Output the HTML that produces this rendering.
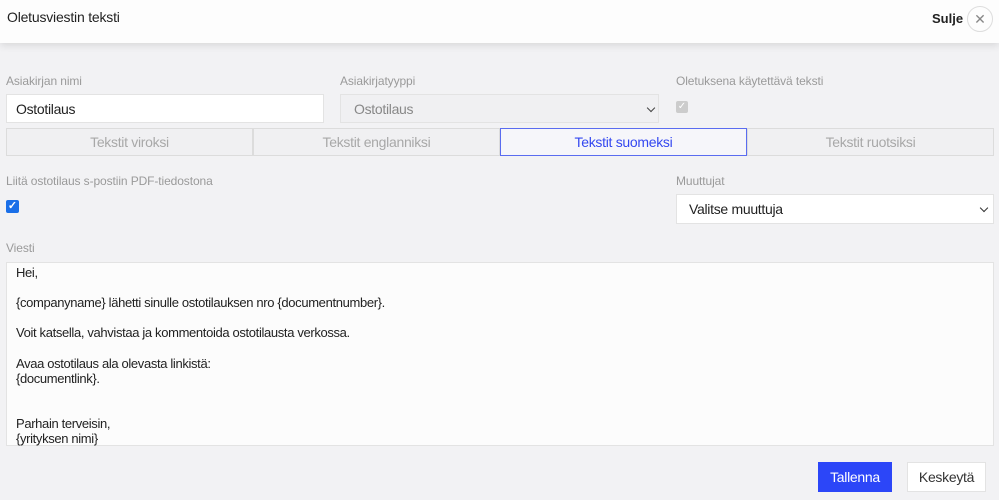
<!DOCTYPE html>
<html><head><meta charset="utf-8"><style>
*{box-sizing:border-box;margin:0;padding:0}
body{width:999px;height:500px;background:#f2f2f4;font-family:"Liberation Sans",sans-serif;position:relative;overflow:hidden;color:#333}
.hdr{position:absolute;left:0;top:0;width:999px;height:43px;background:#fdfdfd;box-shadow:0 2px 8px rgba(0,0,0,.12)}
.abs{position:absolute}
.lbl{position:absolute;font-size:12px;color:#9a9a9a;letter-spacing:-0.1px}
.box{position:absolute;background:#fff;border:1px solid #e3e3e3;font-size:14px;padding-left:9px;display:flex;align-items:center;letter-spacing:-0.3px}
.tab{position:absolute;top:128px;height:28px;border:1px solid #dcdcdc;background:#f0f0f2;color:#a8a8a8;font-size:14px;display:flex;align-items:center;justify-content:center;letter-spacing:-0.3px}
.chev{position:absolute;width:6px;height:6px;border-right:1.5px solid #333;border-bottom:1.5px solid #333;transform:rotate(45deg)}
</style></head><body>
<div class="hdr">
 <div class="abs" style="left:7px;top:9px;font-size:14px;color:#222;letter-spacing:-0.2px">Oletusviestin teksti</div>
 <div class="abs" style="left:932px;top:11px;font-size:13px;font-weight:bold;color:#222">Sulje</div>
 <div class="abs" style="left:967px;top:6px;width:26px;height:26px;border:1px solid #ddd;border-radius:50%;color:#888;font-size:14px;text-align:center;line-height:24px">✕</div>
</div>
<div class="lbl" style="left:6px;top:74px">Asiakirjan nimi</div>
<div class="lbl" style="left:340px;top:74px">Asiakirjatyyppi</div>
<div class="lbl" style="left:676px;top:74px">Oletuksena käytettävä teksti</div>
<div class="box" style="left:6px;top:94px;width:318px;height:29px;color:#222">Ostotilaus</div>
<div class="box" style="left:340px;top:94px;width:319px;height:29px;background:#f0f0f2;color:#888;padding-left:13px">Ostotilaus</div>
<div class="chev" style="left:648px;top:105px;border-color:#444"></div>
<div class="abs" style="left:676px;top:101px;width:12px;height:12px;background:#ccc;border-radius:2px;color:#fff;font-size:10px;line-height:12px;text-align:center">✓</div>
<div class="tab" style="left:6px;width:247px">Tekstit viroksi</div>
<div class="tab" style="left:253px;width:247px">Tekstit englanniksi</div>
<div class="tab" style="left:500px;width:247px;border-color:#5a6cf0;background:#f6f6fa;color:#3448f0">Tekstit suomeksi</div>
<div class="tab" style="left:747px;width:247px">Tekstit ruotsiksi</div>
<div class="lbl" style="left:6px;top:174px">Liitä ostotilaus s-postiin PDF-tiedostona</div>
<div class="abs" style="left:6px;top:200px;width:13px;height:13px;background:#1a6fe8;border-radius:2px;color:#fff;font-size:11px;line-height:13px;text-align:center;font-weight:bold">✓</div>
<div class="lbl" style="left:676px;top:174px">Muuttujat</div>
<div class="box" style="left:676px;top:194px;width:318px;height:30px;color:#222;padding-left:12px">Valitse muuttuja</div>
<div class="chev" style="left:981px;top:205px"></div>
<div class="lbl" style="left:6px;top:241px">Viesti</div>
<div class="box" style="left:6px;top:262px;width:988px;height:184px;background:#fcfcfc;align-items:flex-start;padding:2px 0 0 9px;font-size:13px;line-height:15.1px;color:#222;white-space:pre;letter-spacing:-0.35px">Hei,

{companyname} lähetti sinulle ostotilauksen nro {documentnumber}.

Voit katsella, vahvistaa ja kommentoida ostotilausta verkossa.

Avaa ostotilaus ala olevasta linkistä:
{documentlink}.


Parhain terveisin,
{yrityksen nimi}</div>
<div class="abs" style="left:818px;top:462px;width:74px;height:30px;background:#2c46f8;color:#fff;font-size:14px;text-align:center;line-height:30px;letter-spacing:-0.3px">Tallenna</div>
<div class="abs" style="left:907px;top:462px;width:79px;height:30px;background:#fff;border:1px solid #e3e3e3;color:#333;font-size:14px;text-align:center;line-height:28px;letter-spacing:-0.3px">Keskeytä</div>
</body></html>
